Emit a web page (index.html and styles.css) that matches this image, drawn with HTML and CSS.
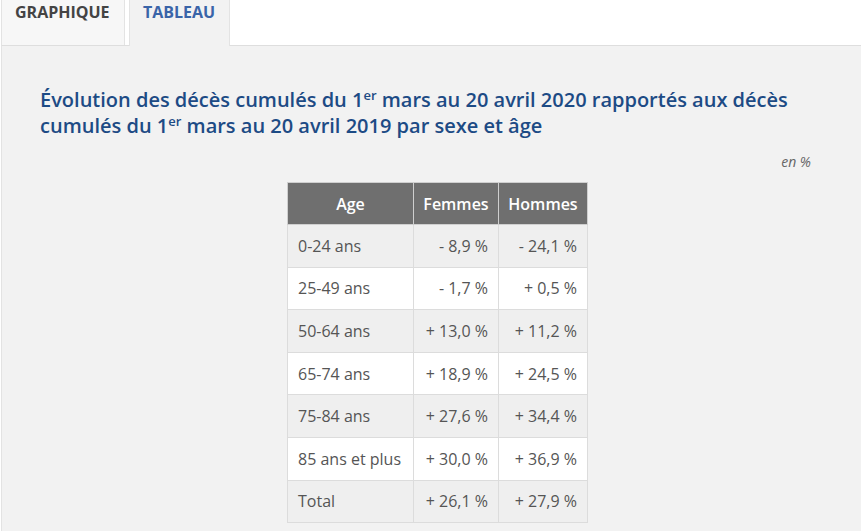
FILE: index.html
```html
<!DOCTYPE html>
<html lang="fr">
<head>
<meta charset="utf-8">
<link rel="stylesheet" href="styles.css">
</head>
<body>
<div class="tabs">
  <div class="tab">GRAPHIQUE</div>
  <div class="tab active">TABLEAU</div>
</div>
<div class="panel">
  <h2 class="title">Évolution des décès cumulés du 1<sup>er</sup> mars au 20 avril 2020 rapportés aux décès cumulés du 1<sup>er</sup> mars au 20 avril 2019 par sexe et âge</h2>
  <p class="unit">en %</p>
  <table class="data">
    <thead>
      <tr><th class="c-age">Age</th><th class="c-f">Femmes</th><th class="c-h">Hommes</th></tr>
    </thead>
    <tbody>
      <tr><td>0-24 ans</td><td class="num">- 8,9 %</td><td class="num">- 24,1 %</td></tr>
      <tr><td>25-49 ans</td><td class="num">- 1,7 %</td><td class="num">+ 0,5 %</td></tr>
      <tr><td>50-64 ans</td><td class="num">+ 13,0 %</td><td class="num">+ 11,2 %</td></tr>
      <tr><td>65-74 ans</td><td class="num">+ 18,9 %</td><td class="num">+ 24,5 %</td></tr>
      <tr><td>75-84 ans</td><td class="num">+ 27,6 %</td><td class="num">+ 34,4 %</td></tr>
      <tr><td>85 ans et plus</td><td class="num">+ 30,0 %</td><td class="num">+ 36,9 %</td></tr>
      <tr><td>Total</td><td class="num">+ 26,1 %</td><td class="num">+ 27,9 %</td></tr>
    </tbody>
  </table>
</div>
</body>
</html>
```

FILE: styles.css
```css
html, body {
  margin: 0;
  padding: 0;
  background: #fff;
  font-family: "Open Sans", "Liberation Sans", sans-serif;
  height: 531px;
  overflow: hidden;
}

.tabs {
  display: flex;
  height: 45px;
  padding-left: 1px;
  position: relative;
  z-index: 1;
}

.tab {
  box-sizing: border-box;
  width: 124px;
  height: 45px;
  background: #f7f7f7;
  border-left: 1px solid #e3e3e3;
  border-right: 1px solid #e3e3e3;
  font-weight: 700;
  font-size: 16px;
  color: #444;
  padding: 1px 0 0 13px;
  line-height: 22px;
}

.tab.active {
  width: 101px;
  margin-left: 4px;
  height: 46px;
  background: #f2f2f2;
  color: #3a64a8;
  padding-left: 13px;
}

.panel {
  box-sizing: border-box;
  height: 486px;
  margin-left: 1px;
  background: #f2f2f2;
  border-top: 1px solid #dedede;
  border-left: 1px solid #e3e3e3;
  padding: 41px 50px 0 38px;
}

.title {
  margin: 0;
  font-size: 20px;
  line-height: 26px;
  font-weight: 600;
  color: #1d4b85;
}

.title sup {
  font-size: 13px;
  line-height: 1;
  vertical-align: 7px;
  font-weight: 600;
}

.unit {
  margin: 14px 0 0;
  text-align: right;
  font-size: 14px;
  line-height: 18px;
  font-style: italic;
  color: #666;
}

.data {
  margin: 11px 0 0 247px;
  border-collapse: collapse;
  font-size: 16px;
  color: #555;
}

.data th {
  background: #6f6f6f;
  color: #fff;
  font-weight: 600;
  border: 1px solid #cfcfcf;
  height: 41px;
  padding: 0;
  text-align: center;
}

.data td {
  border: 1px solid #dcdcdc;
  height: 41.6px;
  padding: 0 10px;
  text-align: left;
}

.data td.num {
  text-align: right;
}

.data tbody tr:nth-child(odd) td {
  background: #efefef;
}

.data tbody tr:nth-child(even) td {
  background: #fff;
}

.c-age { width: 125px; }
.c-f { width: 84px; }
.c-h { width: 88px; }
```
